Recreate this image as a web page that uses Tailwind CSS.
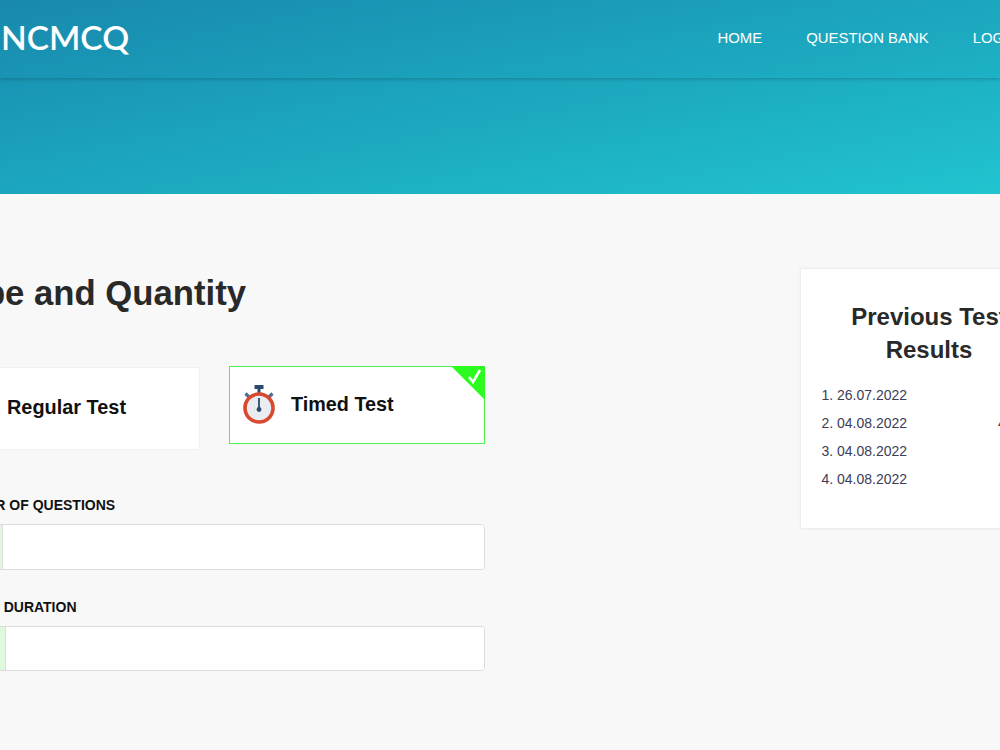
<!DOCTYPE html>
<html lang="en">
<head>
  <meta charset="UTF-8" />
  <title>NCMCQ</title>
  <script src="https://cdn.jsdelivr.net/npm/@tailwindcss/browser@4"></script>
</head>
<body class="bg-[#f8f8f8] overflow-hidden h-[750px] font-['Liberation_Sans',sans-serif]">

  <!-- HERO + NAV -->
  <div class="h-[194px] bg-gradient-to-br from-[#1889ad] to-[#21c4d0]">
    <header class="h-[78px] flex justify-between items-center shadow-[0_1px_4px_rgba(0,0,0,0.22)] overflow-hidden">
      <a class="ml-[1px] -mt-[3px] text-white text-[33.5px] leading-none font-semibold font-['Lato',sans-serif]">NCMCQ</a>
      <nav class="flex gap-[44px] text-white text-[14.9px] uppercase -mr-[19px] -mt-[1px]">
        <a>Home</a>
        <a>Question Bank</a>
        <a>Login</a>
      </nav>
    </header>
  </div>

  <main class="flex -ml-[60px] w-[1118px] items-start">
    <!-- TEST FORM -->
    <section class="w-[545px] pt-[77px]">
      <h2 class="text-[34.7px] leading-[44px] font-bold text-[#292929] text-right pr-[239px] whitespace-nowrap">Type and Quantity</h2>

      <div class="flex gap-[29px] mt-[52px] items-start">
        <div class="w-[260px] h-[83px] bg-white border border-[#f2f2f2] flex items-center pl-[66px]">
          <span class="text-[19.9px] font-bold text-[#111] -mt-[1px]">Regular Test</span>
        </div>
        <div class="relative -mt-[1px] w-[256px] h-[78px] bg-white border border-[#4df04d] flex items-center pl-[11px] gap-[14px]">
          <svg class="w-[36px] h-[42px] mt-[2px]" viewBox="0 0 36 42">
            <rect x="13.5" y="0" width="9" height="4" fill="#2c4a6e"/>
            <path d="M4.5 8.5l4 4M31.5 8.5l-4 4" stroke="#4a6f99" stroke-width="3.2"/>
            <rect x="16.5" y="4" width="3" height="5" fill="#2c4a6e"/>
            <circle cx="18" cy="23" r="14" fill="#e9edf2" stroke="#d9492e" stroke-width="3.6"/>
            <path d="M18 13v11" stroke="#2c4a6e" stroke-width="1.8"/>
            <circle cx="18" cy="24.5" r="2.4" fill="#2c4a6e"/>
          </svg>
          <span class="text-[19.8px] font-bold text-[#111]">Timed Test</span>
          <svg class="absolute -top-[1px] -right-[1px] w-[34px] h-[34px]" viewBox="0 0 34 34">
            <path d="M0 0H34V34Z" fill="#2bfb1f"/>
            <path d="M18 11l4 5 7-12" fill="none" stroke="#fff" stroke-width="2.6"/>
          </svg>
        </div>
      </div>

      <label class="block mt-[45px] ml-[4px] text-[14px] leading-[20px] font-bold text-[#111] whitespace-nowrap">NUMBER OF QUESTIONS</label>
      <div class="flex mt-[9px] h-[46px] border border-[#dcdcdc] rounded-[4px] overflow-hidden">
        <span class="w-[62px] bg-[#dff9df] border-r border-[#dcdcdc]"></span>
        <input class="flex-1 bg-white" type="text" />
      </div>

      <label class="block mt-[27px] ml-[24px] text-[14px] leading-[20px] font-bold text-[#111] whitespace-nowrap">TEST DURATION</label>
      <div class="flex mt-[9px] h-[45px] border border-[#dcdcdc] rounded-[4px] overflow-hidden">
        <span class="w-[65px] bg-[#dff9df] border-r border-[#dcdcdc]"></span>
        <input class="flex-1 bg-white" type="text" />
      </div>
    </section>

    <!-- PREVIOUS RESULTS -->
    <aside class="ml-[315px] mt-[74px] w-[258px] h-[261px] bg-white border border-[#eeeeee] shadow-[0_0_3px_rgba(0,0,0,0.05)] pt-[31px] px-[20px]">
      <h3 class="text-[24px] leading-[33px] font-bold text-[#292929] text-center">Previous Test Results</h3>
      <ol class="mt-[15px] text-[14px] leading-[28px] text-[#3d3d56] list-decimal pl-[16px]">
        <li>26.07.2022</li>
        <li><div class="flex justify-between"><span>04.08.2022</span><span class="w-[39px]">40%</span></div></li>
        <li>04.08.2022</li>
        <li>04.08.2022</li>
      </ol>
    </aside>
  </main>
</body>
</html>
